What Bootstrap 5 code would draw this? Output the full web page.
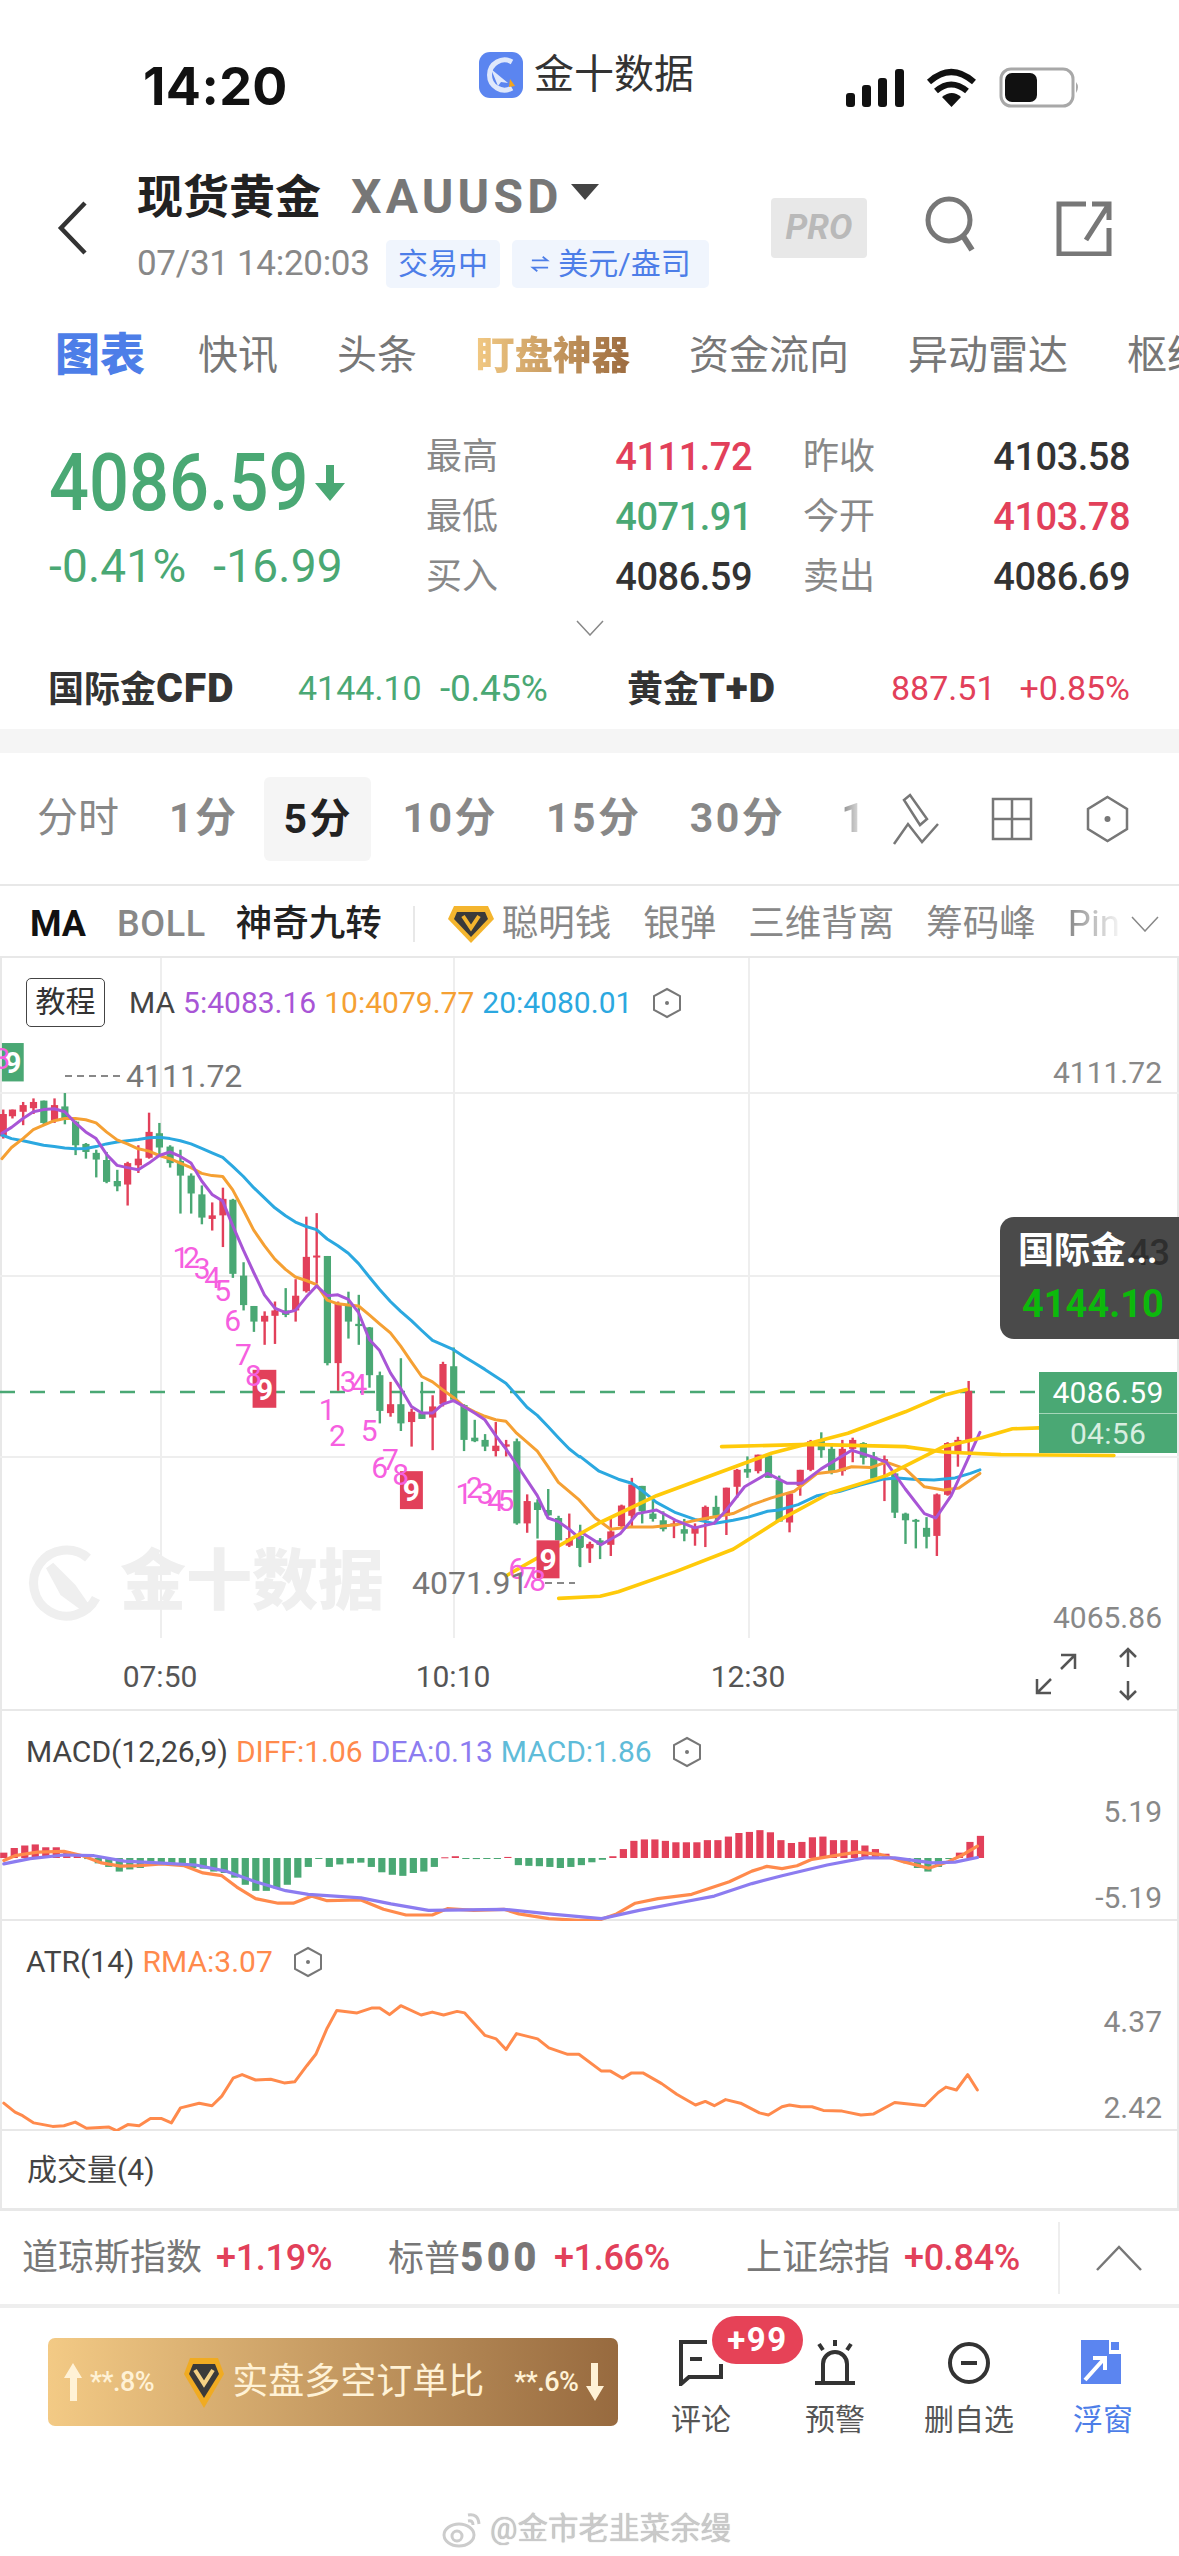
<!DOCTYPE html>
<html lang="zh-CN">
<head>
  <meta charset="UTF-8" />
  <title>现货黄金 XAUUSD</title>
  <link href="https://cdn.jsdelivr.net/npm/bootstrap@5.3.2/dist/css/bootstrap.min.css" rel="stylesheet">
  <style>
    body {
      width: 1179px;
      height: 2556px;
      overflow: hidden;
      background: #fff;
      font-family: Roboto, "Noto Sans CJK SC", sans-serif;
      color: #333;
    }
    svg { display: block; flex: none; }

    /* status bar */
    .status-row { height: 150px; }
    .clock { margin: 60px 0 0 143px; font: 700 52px/54px Inter, sans-serif; color: #111; width: 336px; letter-spacing: .4px; }
    .app-name { margin: 48px 0 0 0; width: 367px; gap: 11px; font-size: 40px; line-height: 54px; color: #333; }
    .status-icons { margin-top: 67px; }

    /* title header */
    .head-row { height: 170px; }
    .back-arrow { margin: 50px 0 0 56px; width: 81px; }
    .head-text { width: 634px; }
    .title-line { margin-top: 18px; height: 58px; font-size: 46px; line-height: 58px; font-weight: 700; color: #222; }
    .sym { margin-left: 30px; font-family: Roboto, sans-serif; font-size: 48px; letter-spacing: 4.2px; color: #777; }
    .sub-line { margin-top: 14px; gap: 12px; }
    .stamp { font-size: 35px; line-height: 48px; color: #888; width: 237px; letter-spacing: -.3px; white-space: nowrap; }
    .pill-soft { background: #f0f5fd; color: #4d7ee8; font-size: 30px; line-height: 48px; height: 48px; border-radius: 5px; padding: 0 12px; font-weight: 400; white-space: nowrap; }
    .pill-wide { width: 197px; padding: 0; }
    .pro-tag { margin: 48px 57px 0 0; width: 96px; height: 60px; background: #e8e8e8; border-radius: 4px; font: italic 700 35px/60px Roboto, sans-serif; color: #b9b9b9; text-align: center; }
    .search-btn { margin: 46px 78px 0 0; }
    .share-btn { margin-top: 50px; }

    /* tabs */
    .tab-row { height: 90px; padding: 10px 0 0 55px; gap: 59px; white-space: nowrap; overflow: hidden; }
    .tab-row .nav-link { padding: 0; color: #777; font-size: 40px; line-height: 52px; }
    .tab-row .nav-link.active { position: relative; margin-right: -6px; color: #4d7ee8; font-size: 45px; font-weight: 900; }
    .tab-row .nav-link.active::after { content: ""; position: absolute; left: 23px; bottom: -17px; width: 48px; height: 6px; background: #f5ab0a; }
    .tab-row .nav-link.gold-tab { font-size: 38.5px; font-weight: 900; background: linear-gradient(90deg, #f2c983, #9c6b3f); -webkit-background-clip: text; background-clip: text; color: transparent; }

    /* quote block */
    .quote-row { height: 205px; padding-top: 17px; }
    .price-col { width: 426px; padding: 14px 0 0 49px; color: #4aa874; }
    .big-price { line-height: 84px; gap: 4px; }
    .big-num { display: inline-block; width: 262px; font-size: 80px; font-weight: 500; transform: scaleX(.88); transform-origin: left; white-space: nowrap; }
    .price-diff { margin-top: 17px; font-size: 46px; line-height: 48px; gap: 27px; letter-spacing: .2px; }
    .stat-grid { display: grid; grid-template-columns: 326px 327px; column-gap: 51px; grid-auto-rows: 60px; }
    .stat-name { color: #888; font-size: 36px; }
    .stat-val { font-size: 38px; font-weight: 500; letter-spacing: -.5px; }
    .tone-up { color: #e2405a; }
    .tone-down { color: #4aa874; }
    .tone-flat { color: #333; }
    .more-mark { height: 37px; padding-top: 5px; }
    .cross-row { height: 77px; padding: 0 49px 4px 48px; font-size: 36px; }
    .cross-name { font-weight: 700; color: #333; }
    .cross-latin { font-size: 41px; font-weight: 900; letter-spacing: .8px; }
    .cross-a { width: 250px; }
    .cross-b { width: 142px; }
    .cross-num { font-size: 34px; }
    .cross-c { width: 187px; font-size: 37px; letter-spacing: -.3px; }
    .gap-band { height: 24px; background: #f5f5f5; }

    /* period strip */
    .period-row { height: 133px; border-bottom: 2px solid #e8e8e8; padding-left: 37px; color: #888; font-size: 41px; position: relative; }
    .period-item { font-weight: 700; white-space: nowrap; letter-spacing: 2.5px; margin-right: 48px; }
    .period-first { font-weight: 400; letter-spacing: 0; margin-right: 50px; }
    .period-item.now { margin: 0 32px 0 -23px; padding: 0 18px 0 20px; width: 107px; background: #f5f5f5; border-radius: 6px; line-height: 84px; color: #222; }
    .period-item.period-fade { background: linear-gradient(90deg, #888, #fff); -webkit-background-clip: text; background-clip: text; color: transparent; margin: 0 0 0 8px; }
    .tool-a, .tool-b, .tool-c { position: absolute; }
    .tool-a { left: 892px; top: 39px; }
    .tool-b { left: 991px; top: 44px; }
    .tool-c { left: 1086px; top: 42px; }

    /* indicator strip */
    .ind-row { height: 72px; border-bottom: 2px solid #e8e8e8; padding: 6px 0 0 30px; font-size: 36.5px; color: #888; white-space: nowrap; }
    .ind-on { color: #222; font-weight: 500; }
    .ind-ma { color: #111; font-weight: 700; margin-right: 31px; font-size: 36px; }
    .ind-boll { font-weight: 500; margin-right: 30px; letter-spacing: .6px; font-size: 36px; }
    .ind-item { margin-right: 32px; }
    .ind-bar { width: 2px; height: 36px; background: #e8e8e8; margin: 0 33px 0 31px; }
    .pin-fade { background: linear-gradient(90deg, #888, #fff); -webkit-background-clip: text; background-clip: text; color: transparent; width: 56px; margin-right: 7px; }

    /* chart panels */
    .panel-box { position: relative; border-left: 2px solid #e8e8e8; border-right: 2px solid #e8e8e8; }
    .chart-main { height: 680px; }
    .chart-main > svg, .chart-sub > svg { position: absolute; left: -2px; top: 0; }
    .legend-row { position: relative; font-size: 30px; line-height: 40px; gap: 8px; white-space: nowrap; }
    .legend-main { padding: 20px 0 0 24px; }
    .legend-sub { padding: 21px 0 0 24px; }
    .lesson-tag { border: 1.5px solid #444; border-radius: 5px; width: 79px; height: 49px; line-height: 46px; text-align: center; margin-right: 16px; color: #333; }
    .hex-ico { margin-left: 12px; }
    .c-ink { color: #444; }
    .c-ma5 { color: #a855d6; }
    .c-ma10 { color: #f5a033; }
    .c-ma20 { color: #2ba8e0; }
    .c-diff { color: #ff8a4c; }
    .c-dea { color: #8c7cf0; }
    .c-macd { color: #5fbcd9; }
    .time-row { height: 73px; border-bottom: 2px solid #e8e8e8; position: relative; font-size: 30px; color: #555; }
    .time-row span { position: absolute; top: 16px; transform: translateX(-50%); }
    .time-row svg { position: absolute; }
    .t-a { left: 158px; }
    .t-b { left: 451px; }
    .t-c { left: 746px; }
    .zoom-ico { left: 1033px; top: 15px; }
    .fit-ico { left: 1114px; top: 9px; }
    .chart-sub { height: 210px; border-bottom: 2px solid #e8e8e8; }
    .vol-box { height: 80px; border-bottom: 3px solid #e8e8e8; padding-left: 25px; font-size: 30px; color: #444; line-height: 77px; }
    .rate-tip { position: absolute; right: -2px; top: 259px; width: 179px; height: 122px; background: #4a4a4a; border-radius: 14px 0 0 14px; padding: 12px 0 0 18px; }
    .rate-tip em { position: absolute; left: 129px; top: 16px; font: 500 36px/40px Roboto, sans-serif; color: #2e2e2e; }
    .rate-tip b { position: relative; display: block; font-size: 36px; line-height: 44px; color: #fff; white-space: nowrap; }
    .rate-tip i { display: block; font: 700 38px/48px Roboto, sans-serif; color: #0cb90c; margin: 7px 0 0 4px; }
    .price-tag { position: absolute; right: 0; top: 414px; width: 138px; background: #4aa874; color: #fff; text-align: center; font-size: 30px; letter-spacing: .3px; }
    .price-tag div:first-child { line-height: 41px; border-bottom: 1px solid #a5d6b9; }
    .price-tag div:last-child { line-height: 39px; color: #d8eee0; }

    /* index strip */
    .index-row { height: 97px; border-bottom: 4px solid #eee; padding-left: 22px; font-size: 36px; color: #777; white-space: nowrap; }
    .index-pct { color: #e2405a; font-size: 36px; font-weight: 500; margin-left: 14px; letter-spacing: -.3px; }
    .index-mid { margin-left: 56px; }
    .index-mid b { font-size: 40px; font-weight: 900; letter-spacing: 3.4px; }
    .index-end { margin-left: 76px; }
    .index-split { width: 2px; height: 72px; background: #eee; margin-left: 38px; margin-right: 36px; }

    /* bottom bar */
    .foot-row { height: 130px; padding: 30px 0 0 48px; position: relative; }
    .ratio-btn { width: 570px; height: 88px; padding: 0 16px; border: 0; border-radius: 7px; background: linear-gradient(90deg, #f3ca85, #976a3f); color: #fff2d6; font-size: 36px; white-space: nowrap; }
    .ratio-num { font-size: 27px; letter-spacing: -.5px; font-weight: 500; }
    .ratio-ico { margin-left: 30px; }
    .ratio-low { margin-left: 30px; }
    .foot-items { margin-left: 16px; }
    .foot-item { position: relative; width: 134px; text-align: center; font-size: 30px; line-height: 36px; color: #555; padding-top: 2px; }
    .foot-item svg { margin: 0 auto 16px; }
    .foot-item.on { color: #4d7ee8; }
    .count-tag { position: absolute; left: 78px; top: -22px; width: 91px; height: 48px; line-height: 48px; padding: 0; border-radius: 24px; background: #e64257; font: 700 33px/48px Roboto, sans-serif; letter-spacing: 1.5px; }
    .mark-row { height: 110px; padding: 72px 0 0 442px; gap: 8px; }
    .mark-row span { color: #c9c9c9; font-size: 30.5px; line-height: 38px; text-shadow: 0 0 1px #aaa; white-space: nowrap; }

    text { font-family: Roboto, "Noto Sans CJK SC", sans-serif; }
  </style>
</head>
<body>

<!-- status bar -->
<div class="status-row d-flex">
  <div class="clock">14:20</div>
  <div class="app-name d-flex align-items-start">
    <svg width="44" height="46" viewBox="0 0 44 46" class="mt-1">
      <rect width="44" height="46" rx="11" fill="#5b85f0"/>
      <path d="M33 10a15 15 0 1 0 0 26" fill="none" stroke="#dfe8fb" stroke-width="5"/>
      <path d="M12 17l17 14-7-1-3 4z" fill="#dfe8fb"/>
      <path d="M31 27l5 7-6 1z" fill="#f3a51d"/>
    </svg>
    <span>金十数据</span>
  </div>
  <div class="status-icons d-flex">
    <svg width="240" height="42" viewBox="846 67 240 42">
      <rect x="846" y="93" width="9" height="14" rx="3" fill="#111"/>
      <rect x="862" y="85" width="9" height="22" rx="3" fill="#111"/>
      <rect x="878" y="78" width="9" height="29" rx="3" fill="#111"/>
      <rect x="895" y="69" width="9" height="38" rx="3" fill="#111"/>
      <path d="M929 82q22-20 45 0M936 91q15-13 31 0" fill="none" stroke="#111" stroke-width="6"/>
      <path d="M942 97q10-8 19 0l-9.500 10z" fill="#111"/>
      <rect x="1001" y="69" width="72" height="37" rx="10" fill="none" stroke="#a8a8a8" stroke-width="3"/>
      <rect x="1005" y="73" width="32" height="29" rx="7" fill="#111"/>
      <path d="M1076 82q4 5 0 11z" fill="#a8a8a8"/>
    </svg>
  </div>
</div>

<!-- title -->
<div class="head-row d-flex">
  <div class="back-arrow">
    <svg width="32" height="56" viewBox="0 0 32 56"><path d="M29 3L5 28l24 25" fill="none" stroke="#333" stroke-width="4.500"/></svg>
  </div>
  <div class="head-text">
    <div class="title-line d-flex">现货黄金<span class="sym">XAUUSD</span>
      <svg width="28" height="16" viewBox="0 0 28 16" class="ms-2 mt-3"><path d="M0 0h28L14 16z" fill="#444"/></svg>
    </div>
    <div class="sub-line d-flex align-items-center">
      <span class="stamp">07/31 14:20:03</span>
      <span class="pill-soft">交易中</span>
      <span class="pill-soft pill-wide d-flex align-items-center justify-content-center gap-2">
        <svg width="20" height="18" viewBox="0 0 22 20"><path d="M2 6h17l-5-4M20 14H3l5 4" fill="none" stroke="#4d7ee8" stroke-width="2"/></svg>美元/盎司
      </span>
    </div>
  </div>
  <div class="pro-tag">PRO</div>
  <div class="search-btn">
    <svg width="54" height="58" viewBox="0 0 54 58"><circle cx="25" cy="24" r="21" fill="none" stroke="#777" stroke-width="5"/><path d="M39 40l9 14" stroke="#777" stroke-width="6"/></svg>
  </div>
  <div class="share-btn">
    <svg width="56" height="56" viewBox="0 0 56 56"><path d="M30 4H3v50h50V28M53 4L30 40M36 4h17v16" fill="none" stroke="#777" stroke-width="5"/></svg>
  </div>
</div>

<!-- tabs -->
<nav class="nav flex-nowrap tab-row">
  <a class="nav-link active" href="#">图表</a>
  <a class="nav-link" href="#">快讯</a>
  <a class="nav-link" href="#">头条</a>
  <a class="nav-link gold-tab" href="#">盯盘神器</a>
  <a class="nav-link" href="#">资金流向</a>
  <a class="nav-link" href="#">异动雷达</a>
  <a class="nav-link" href="#">枢纽</a>
</nav>

<!-- quote -->
<div class="quote-row d-flex">
  <div class="price-col">
    <div class="big-price d-flex align-items-center"><span class="big-num">4086.59</span>
      <svg width="30" height="36" viewBox="0 0 30 36"><path d="M11 0h8v18h11L15 36 0 18h11z" fill="#4aa874"/></svg>
    </div>
    <div class="price-diff d-flex"><span>-0.41%</span><span>-16.99</span></div>
  </div>
  <div class="stat-grid">
    <div class="d-flex justify-content-between align-items-center"><span class="stat-name">最高</span><span class="stat-val tone-up">4111.72</span></div>
    <div class="d-flex justify-content-between align-items-center"><span class="stat-name">昨收</span><span class="stat-val tone-flat">4103.58</span></div>
    <div class="d-flex justify-content-between align-items-center"><span class="stat-name">最低</span><span class="stat-val tone-down">4071.91</span></div>
    <div class="d-flex justify-content-between align-items-center"><span class="stat-name">今开</span><span class="stat-val tone-up">4103.78</span></div>
    <div class="d-flex justify-content-between align-items-center"><span class="stat-name">买入</span><span class="stat-val tone-flat">4086.59</span></div>
    <div class="d-flex justify-content-between align-items-center"><span class="stat-name">卖出</span><span class="stat-val tone-flat">4086.69</span></div>
  </div>
</div>
<div class="more-mark d-flex justify-content-center align-items-start">
  <svg width="28" height="16" viewBox="0 0 28 16"><path d="M1 1l13 14L27 1" fill="none" stroke="#888" stroke-width="1.500"/></svg>
</div>
<div class="cross-row d-flex align-items-center">
  <span class="cross-name cross-a">国际金<span class="cross-latin">CFD</span></span>
  <span class="cross-num tone-down cross-b">4144.10</span>
  <span class="cross-num tone-down cross-c">-0.45%</span>
  <span class="cross-name flex-grow-1">黄金<span class="cross-latin">T+D</span></span>
  <span class="cross-num tone-up me-4">887.51</span>
  <span class="cross-num tone-up">+0.85%</span>
</div>
<div class="gap-band"></div>

<!-- period strip -->
<div class="period-row d-flex align-items-center">
  <span class="period-item period-first">分时</span>
  <span class="period-item">1分</span>
  <span class="period-item now">5分</span>
  <span class="period-item">10分</span>
  <span class="period-item">15分</span>
  <span class="period-item">30分</span>
  <span class="period-item period-fade">1</span>
  <svg class="tool-a" width="50" height="54" viewBox="0 0 50 54" fill="none" stroke="#777" stroke-width="2.500">
    <path d="M18 3l17 24-7 6-16-25zM2 52l14-20 14 18 16-18"/>
  </svg>
  <svg class="tool-b" width="42" height="44" viewBox="0 0 42 44" fill="none" stroke="#777" stroke-width="2.500">
    <path d="M2 2h38v40H2zM21 2v40M2 22h38"/>
  </svg>
  <svg class="tool-c" width="43" height="48" viewBox="0 0 43 48" fill="none" stroke="#777" stroke-width="2.500">
    <path d="M21.500 2L41 14v20L21.500 46 2 34V14z"/><circle cx="21.500" cy="24" r="3" fill="#777" stroke="none"/>
  </svg>
</div>

<!-- indicator strip -->
<div class="ind-row d-flex align-items-center">
  <span class="ind-ma">MA</span>
  <span class="ind-boll">BOLL</span>
  <span class="ind-on">神奇九转</span>
  <span class="ind-bar"></span>
  <svg width="46" height="38" viewBox="0 0 46 38" class="me-2"><path d="M6 1h34l6 13-23 24L0 14z" fill="#f4b52e"/><path d="M9 7h28l3 7-17 18L6 14z" fill="#3a3a3a"/><path d="M15 11l8 12 8-12" fill="none" stroke="#f4b52e" stroke-width="4"/></svg>
  <span class="ind-item">聪明钱</span>
  <span class="ind-item">银弹</span>
  <span class="ind-item">三维背离</span>
  <span class="ind-item">筹码峰</span>
  <span class="pin-fade">Pin</span>
  <svg width="28" height="16" viewBox="0 0 28 16"><path d="M1 1l13 14L27 1" fill="none" stroke="#888" stroke-width="1.500"/></svg>
</div>

<!-- main chart -->
<div class="panel-box chart-main">
  <svg id="mainChart" width="1179" height="680" viewBox="0 958 1179 680"></svg>
  <div class="legend-row legend-main d-flex align-items-center">
    <span class="lesson-tag">教程</span>
    <span class="c-ink">MA</span>
    <span class="c-ma5">5:4083.16</span>
    <span class="c-ma10">10:4079.77</span>
    <span class="c-ma20">20:4080.01</span>
    <svg width="30" height="32" viewBox="0 0 30 32" class="hex-ico" fill="none" stroke="#777" stroke-width="2"><path d="M15 2l13 7v14l-13 7-13-7V9z"/><circle cx="15" cy="16" r="2" fill="#777" stroke="none"/></svg>
  </div>
  <div class="rate-tip"><em>43</em><b>国际金...</b><i>4144.10</i></div>
  <div class="price-tag"><div>4086.59</div><div>04:56</div></div>
</div>
<div class="panel-box time-row">
  <span class="t-a">07:50</span>
  <span class="t-b">10:10</span>
  <span class="t-c">12:30</span>
  <svg class="zoom-ico" width="42" height="42" viewBox="0 0 42 42" fill="none" stroke="#555" stroke-width="2.500"><path d="M26 2h14v14M40 2L26 16M2 26v14h14M2 40l14-14"/></svg>
  <svg class="fit-ico" width="24" height="54" viewBox="0 0 24 54" fill="none" stroke="#555" stroke-width="2.500"><path d="M12 20V2M4 10l8-8 8 8M12 34v18M4 44l8 8 8-8"/></svg>
</div>

<!-- MACD -->
<div class="panel-box chart-sub">
  <svg id="macdChart" width="1179" height="210" viewBox="0 1711 1179 210"></svg>
  <div class="legend-row legend-sub d-flex align-items-center">
    <span class="c-ink">MACD(12,26,9)</span>
    <span class="c-diff">DIFF:1.06</span>
    <span class="c-dea">DEA:0.13</span>
    <span class="c-macd">MACD:1.86</span>
    <svg width="30" height="32" viewBox="0 0 30 32" class="hex-ico" fill="none" stroke="#777" stroke-width="2"><path d="M15 2l13 7v14l-13 7-13-7V9z"/><circle cx="15" cy="16" r="2" fill="#777" stroke="none"/></svg>
  </div>
</div>

<!-- ATR -->
<div class="panel-box chart-sub">
  <svg id="atrChart" width="1179" height="210" viewBox="0 1921 1179 210"></svg>
  <div class="legend-row legend-sub d-flex align-items-center">
    <span class="c-ink">ATR(14)</span>
    <span class="c-diff">RMA:3.07</span>
    <svg width="30" height="32" viewBox="0 0 30 32" class="hex-ico" fill="none" stroke="#777" stroke-width="2"><path d="M15 2l13 7v14l-13 7-13-7V9z"/><circle cx="15" cy="16" r="2" fill="#777" stroke="none"/></svg>
  </div>
</div>

<div class="panel-box vol-box">成交量(4)</div>

<!-- index strip -->
<div class="index-row d-flex align-items-center">
  <span>道琼斯指数</span><span class="index-pct">+1.19%</span>
  <span class="index-mid">标普<b>500</b></span><span class="index-pct">+1.66%</span>
  <span class="index-end">上证综指</span><span class="index-pct">+0.84%</span>
  <span class="index-split"></span>
  <svg width="46" height="26" viewBox="0 0 46 26"><path d="M1 25L23 2l22 23" fill="none" stroke="#777" stroke-width="2.500"/></svg>
</div>

<!-- bottom bar -->
<div class="foot-row d-flex">
  <button class="btn ratio-btn d-flex align-items-center" type="button">
    <svg width="18" height="38" viewBox="0 0 18 38"><path d="M9 0l9 15h-5v23H6V15H0z" fill="#fff2d6"/></svg>
    <span class="ratio-num ms-2">**.8%</span>
    <svg class="ratio-ico" width="40" height="52" viewBox="0 0 40 52"><path d="M6 2h28l6 16-20 34L0 18z" fill="#f0ab22"/><path d="M9 8h22l4 10-15 24L5 18z" fill="#3a3a3a"/><path d="M11 14l9 14 9-14" fill="none" stroke="#f4d184" stroke-width="4"/></svg>
    <span class="ms-2">实盘多空订单比</span>
    <span class="ratio-num ratio-low">**.6%</span>
    <svg width="18" height="38" viewBox="0 0 18 38" class="ms-2"><path d="M9 38L0 23h5V0h7v23h6z" fill="#fff2d6"/></svg>
  </button>
  <div class="foot-items d-flex">
    <div class="foot-item">
      <svg width="44" height="46" viewBox="0 0 44 46" fill="none" stroke="#333" stroke-width="4"><path d="M28 2H2v42l8-7h32V24M11 19h12"/></svg>
      评论
      <span class="badge count-tag">+99</span>
    </div>
    <div class="foot-item">
      <svg width="44" height="46" viewBox="0 0 44 46" fill="none" stroke="#333" stroke-width="4"><path d="M10 42V24a12 12 0 0 1 24 0v18M2 43h40M22 0v6M6 4l4 6M38 4l-4 6"/></svg>
      预警
    </div>
    <div class="foot-item">
      <svg width="44" height="46" viewBox="0 0 44 46" fill="none" stroke="#333"><circle cx="22" cy="23" r="19" stroke-width="4"/><path d="M14 23h16" stroke-width="4"/></svg>
      删自选
    </div>
    <div class="foot-item on">
      <svg width="44" height="46" viewBox="0 0 44 46"><path d="M0 0h28v14h12v30H0z" fill="#5b85f0"/><path d="M30 2h8v8h-8z" fill="#5b85f0"/><path d="M4 40l18-20M12 18h12v12" fill="none" stroke="#fff" stroke-width="4"/></svg>
      浮窗
    </div>
  </div>
</div>
<div class="mark-row d-flex">
  <svg width="40" height="38" viewBox="0 0 40 38" fill="none" stroke="#ccc" stroke-width="3"><ellipse cx="17" cy="25" rx="15" ry="11"/><circle cx="15" cy="26" r="5"/><path d="M26 5q10-2 11 9M26 11q5-1 5 4"/></svg>
  <span>@金市老韭菜余缦</span>
</div>

<script>
  const RED = "#e2405a", GREEN = "#4aa874";
  const NS = "http://www.w3.org/2000/svg";

  function add(svg, tag, attrs, txt) {
    const el = document.createElementNS(NS, tag);
    for (const k in attrs) el.setAttribute(k, attrs[k]);
    if (txt !== undefined) el.textContent = txt;
    svg.appendChild(el);
    return el;
  }

  // crop coordinates measured on the reference -> page coordinates
  const z3 = p => [p[0] / 2.613, 960 + p[1] / 2.24];
  const z4 = p => [580 + p[0] / 2.613, 960 + p[1] / 2.24];
  const z5 = p => [p[0] / 1.33, 1680 + p[1] / 2.8];

  function line(svg, pts, color, width) {
    add(svg, "polyline", {
      points: pts.map(p => p[0].toFixed(1) + "," + p[1].toFixed(1)).join(" "),
      fill: "none", stroke: color, "stroke-width": width,
      "stroke-linejoin": "round", "stroke-linecap": "round"
    });
  }

  function axisText(svg, y, txt) {
    add(svg, "text", { x: 1162, y: y, "text-anchor": "end", "font-size": 30, fill: "#888" }, txt);
  }

  // ---- main chart
  const main = document.getElementById("mainChart");
  [1092, 1275, 1456, 1638].forEach(y => add(main, "rect", { x: 0, y: y, width: 1179, height: 2, fill: "#eee" }));
  [160, 453, 748].forEach(x => add(main, "rect", { x: x, y: 958, width: 2, height: 680, fill: "#eee" }));
  add(main, "line", { x1: 0, x2: 1040, y1: 1392, y2: 1392, stroke: GREEN, "stroke-width": 2.5, "stroke-dasharray": "15 15" });

  // x, wick top, body top, body bottom, wick bottom, colour
  const leftCandles = [
    [8,335,345,395,400,"r"],[32,335,335,350,355,"r"],[60,318,325,340,370,"r"],[87,310,318,332,345,"r"],
    [114,315,315,365,368,"g"],[142,310,325,360,365,"r"],[169,298,328,355,368,"g"],[197,360,362,415,437,"g"],
    [224,410,412,430,445,"g"],[251,425,432,447,487,"g"],[278,430,448,497,500,"g"],[306,470,495,507,518,"g"],
    [333,452,455,503,550,"r"],[361,415,445,460,477,"r"],[389,342,385,443,445,"r"],[416,365,388,420,435,"g"],
    [444,415,418,455,465,"g"],[471,425,450,483,568,"g"],[499,478,483,523,568,"g"],[527,505,525,577,592,"g"],
    [554,543,572,580,606,"r"],[582,510,535,572,643,"r"],[608,535,537,703,712,"g"],[636,677,707,773,785,"g"],
    [663,775,775,810,833,"g"],[691,787,797,810,862,"r"],[718,765,785,797,860,"r"],[746,735,785,795,800,"g"],
    [772,715,752,785,810,"r"],[800,575,665,742,745,"r"],[827,567,662,665,725,"r"],[855,663,663,903,908,"g"],
    [883,765,770,903,965,"r"],[910,743,775,810,848,"g"],[937,750,815,820,862,"g"],[965,822,823,930,958,"g"],
    [992,922,930,1010,1038,"g"],[1020,945,995,1015,1023,"r"],[1047,892,995,1038,1055,"g"],[1075,1005,1012,1035,1090,"r"],
    [1102,945,1015,1028,1028,"g"],[1130,975,1000,1025,1098,"r"],[1157,900,905,995,1000,"r"],[1185,868,910,985,990,"g"],
    [1212,995,997,1075,1100,"g"],[1240,1030,1070,1078,1080,"g"],[1267,1062,1075,1090,1100,"g"],[1295,1035,1088,1100,1112,"r"],
    [1322,1075,1085,1090,1112,"r"],[1350,1072,1078,1262,1265,"g"],[1377,1197,1212,1262,1283,"r"],[1404,1208,1215,1232,1296,"g"],
    [1432,1185,1232,1244,1245,"g"],[1459,1245,1250,1300,1300,"g"],[1487,1240,1295,1312,1315,"r"],[1514,1285,1292,1317,1358,"g"],
    [1541,1303,1308,1315,1350,"r"]
  ];
  const rightCandles = [
    [0,1265,1290,1315,1360,"g"],[25,1305,1310,1318,1350,"r"],[52,1295,1300,1310,1342,"g"],[80,1250,1280,1310,1335,"r"],
    [108,1220,1222,1268,1270,"r"],[135,1160,1175,1245,1272,"r"],[162,1178,1178,1235,1262,"g"],[190,1205,1240,1252,1258,"g"],
    [217,1235,1255,1275,1280,"g"],[245,1255,1262,1268,1295,"r"],[272,1252,1275,1285,1302,"g"],[300,1262,1270,1285,1312,"r"],
    [327,1222,1225,1255,1315,"r"],[355,1200,1225,1245,1262,"g"],[382,1182,1182,1245,1288,"r"],[410,1140,1142,1180,1205,"r"],
    [437,1112,1140,1148,1160,"g"],[465,1108,1108,1145,1150,"r"],[492,1108,1110,1160,1160,"g"],[520,1155,1165,1258,1258,"g"],
    [547,1195,1195,1260,1282,"r"],[575,1142,1142,1178,1200,"r"],[602,1075,1078,1142,1145,"r"],[630,1058,1075,1098,1115,"g"],
    [657,1082,1095,1145,1152,"g"],[685,1075,1095,1145,1155,"r"],[712,1070,1075,1095,1125,"r"],[740,1080,1082,1115,1130,"g"],
    [767,1102,1112,1162,1165,"g"],[795,1110,1118,1125,1212,"r"],[822,1145,1150,1238,1250,"g"],[850,1238,1240,1255,1308,"g"],
    [877,1252,1254,1258,1318,"g"],[905,1248,1272,1292,1318,"g"],[932,1195,1197,1290,1335,"r"],[960,1080,1082,1198,1200,"r"],
    [987,1068,1075,1105,1135,"r"],[1015,943,965,1075,1105,"r"]
  ];
  function drawCandles(list, map) {
    list.forEach(c => {
      const color = c[5] === "r" ? RED : GREEN;
      const top = map([c[0], c[1]]), bTop = map([c[0], c[2]]), bBot = map([c[0], c[3]]), low = map([c[0], c[4]]);
      add(main, "rect", { x: top[0] - 1, y: top[1], width: 2.4, height: low[1] - top[1], fill: color });
      add(main, "rect", { x: top[0] - 3.4, y: bTop[1], width: 7.2, height: Math.max(bBot[1] - bTop[1], 2), fill: color });
    });
  }
  drawCandles(leftCandles, z3);
  drawCandles(rightCandles, z4);

  const ma20 = [[5,392],[30,400],[60,405],[87,410],[114,415],[142,418],[169,421],[197,423],[224,422],[251,418],[278,412],[306,408],[333,405],[361,402],[389,398],[416,397],[444,400],[471,405],[499,412],[527,422],[554,432],[582,442],[608,462],[636,485],[663,510],[691,533],[718,555],[746,573],[772,587],[800,597],[827,604],[855,625],[883,640],[910,657],[937,680],[965,710],[992,738],[1020,765],[1047,787],[1075,808],[1102,830],[1130,852],[1157,862],[1185,873],[1212,888],[1240,903],[1267,917],[1295,933],[1322,948],[1350,975],[1377,1002],[1404,1020],[1432,1045],[1459,1070],[1487,1095],[1514,1113]].map(z3)
    .concat([[0,1112],[50,1145],[100,1163],[135,1172],[165,1190],[200,1215],[250,1238],[300,1253],[350,1262],[400,1255],[440,1248],[490,1235],[520,1232],[570,1220],[620,1200],[680,1190],[730,1177],[790,1163],[830,1160],[870,1163],[925,1165],[980,1160],[1020,1150],[1045,1142]].map(z4));
  const ma10 = [[5,445],[30,420],[60,400],[87,380],[114,370],[142,360],[169,355],[197,355],[224,358],[251,365],[278,385],[306,403],[333,412],[361,423],[389,428],[416,438],[444,445],[471,455],[499,465],[527,478],[554,483],[582,485],[608,515],[636,560],[663,605],[691,640],[718,670],[746,693],[772,710],[800,718],[827,727],[855,762],[883,770],[910,773],[937,775],[965,795],[992,815],[1020,835],[1047,865],[1075,900],[1102,933],[1130,945],[1157,963],[1185,980],[1212,1000],[1240,1012],[1267,1022],[1295,1030],[1322,1033],[1350,1060],[1377,1080],[1404,1100],[1432,1135],[1459,1170],[1487,1190],[1514,1210]].map(z3)
    .concat([[0,1212],[40,1250],[80,1275],[130,1270],[190,1270],[250,1265],[320,1252],[400,1240],[450,1220],[500,1205],[560,1190],[620,1150],[670,1145],[710,1135],[760,1137],[800,1125],[850,1140],[900,1180],[950,1187],[990,1183],[1020,1165],[1045,1150]].map(z4));
  const ma5 = [[5,388],[30,375],[60,355],[87,340],[114,335],[142,333],[169,340],[197,365],[224,385],[251,400],[278,435],[306,460],[333,465],[361,470],[389,455],[416,438],[444,430],[471,440],[499,455],[527,495],[554,525],[582,540],[608,595],[636,650],[663,700],[691,750],[718,780],[746,790],[772,785],[800,755],[827,730],[855,752],[883,750],[910,760],[937,790],[965,850],[992,875],[1020,925],[1047,960],[1075,1000],[1102,1015],[1130,1015],[1157,995],[1185,987],[1212,1000],[1240,1015],[1267,1030],[1295,1065],[1322,1095],[1350,1130],[1377,1165],[1404,1200],[1432,1250],[1459,1258],[1487,1275],[1514,1295]].map(z3)
    .concat([[0,1280],[55,1310],[105,1285],[150,1240],[200,1232],[250,1255],[300,1272],[350,1262],[380,1235],[430,1180],[490,1150],[540,1172],[580,1172],[630,1140],[710,1098],[760,1112],[800,1125],[850,1185],[900,1240],[930,1250],[970,1200],[1010,1125],[1045,1058]].map(z4));
  line(main, ma20, "#2ba8e0", 3);
  line(main, ma10, "#f5a033", 3);
  line(main, ma5, "#a855d6", 3);

  // hand drawn channel
  const yellow = "#ffca0a";
  line(main, [z3([1325,1378]), z3([1568,1260])].concat([[200,1200],[500,1105],[700,1060],[850,1012],[950,975],[1010,962]].map(z4)), yellow, 3.6);
  line(main, [[370,1090],[600,1085],[850,1090],[950,1102],[1100,1108],[1395,1110]].map(z4), yellow, 3.6);
  line(main, [z3([1460,1430]), z3([1568,1425])].concat([[100,1415],[250,1370],[400,1320],[520,1255],[650,1195],[800,1155],[950,1090],[1050,1070],[1130,1050],[1200,1048]].map(z4)), yellow, 3.6);

  // nine-turn marks
  [[5,186,57,86,GREEN],[660,918,62,85,RED],[1045,1145,60,85,RED],[1402,1300,60,85,RED]].forEach(b => {
    const p = z3([b[0], b[1]]);
    add(main, "rect", { x: p[0], y: p[1], width: b[2] / 2.613, height: b[3] / 2.24, fill: b[4] });
    add(main, "text", { x: p[0] + b[2] / 5.2, y: p[1] + 30, "text-anchor": "middle", "font-size": 30, "font-weight": 700, fill: "#fff" }, "9");
  });
  const pink = [["1",473,690],["2",500,690],["3",528,714],["4",556,734],["5",582,764],["6",608,832],["7",636,907],["8",662,954],["3",5,244],
    ["1",855,1030],["2",882,1089],["3",910,967],["4",938,975],["5",965,1077],["6",992,1160],["7",1020,1142],["8",1047,1175],
    ["1",1212,1219],["2",1240,1204],["3",1268,1219],["4",1295,1234],["5",1322,1234],["6",1350,1387],["7",1380,1407],["8",1405,1414]];
  pink.forEach(n => {
    const p = z3([n[1], n[2]]);
    add(main, "text", { x: p[0], y: p[1], "text-anchor": "middle", "font-size": 30, fill: "#f65fe0" }, n[0]);
  });

  // watermark
  add(main, "text", { x: 120, y: 1604, "font-size": 66, "font-weight": 900, fill: "#efefef" }, "金十数据");
  add(main, "path", { d: "M88 1558a33 33 0 1 0 8 40M50 1566l22 22 14 20-22-16z", fill: "none", stroke: "#efefef", "stroke-width": 9 });

  // high and low marks
  add(main, "line", { x1: 65, x2: 120, y1: 1076, y2: 1076, stroke: "#888", "stroke-width": 2, "stroke-dasharray": "7 5" });
  add(main, "text", { x: 126, y: 1087, "font-size": 32, fill: "#777" }, "4111.72");
  add(main, "text", { x: 412, y: 1594, "font-size": 32, fill: "#777" }, "4071.91");
  add(main, "line", { x1: 545, x2: 575, y1: 1583, y2: 1583, stroke: "#888", "stroke-width": 2, "stroke-dasharray": "7 5" });
  axisText(main, 1083, "4111.72");
  axisText(main, 1628, "4065.86");

  // ---- MACD
  const macd = document.getElementById("macdChart");
  const bars = [15,28,35,38,30,30,18,8,-3,-15,-25,-38,-32,-28,-20,-12,-18,-20,-28,-30,-38,-42,-55,-75,-92,-92,-85,-75,-55,-25,-2,-25,-18,-15,-13,-25,-40,-47,-50,-42,-38,-25,2,5,-2,-3,-2,-1,3,-20,-22,-23,-25,-28,-25,-20,-12,-5,5,25,48,52,52,48,44,44,44,50,50,60,70,73,78,72,50,42,45,58,60,50,50,50,35,25,12,-3,-15,-28,-38,-25,-3,15,45,62];
  const barStep = (1304 - 5) / (bars.length - 1);
  bars.forEach((v, i) => {
    const x = (5 + barStep * i) / 1.33;
    const h = Math.abs(v) / 2.8;
    add(macd, "rect", { x: x - 3.6, y: v > 0 ? 1858 - h : 1858, width: 7.2, height: Math.max(h, 1), fill: v > 0 ? RED : GREEN });
  });
  line(macd, [[5,505],[20,492],[50,482],[85,480],[110,492],[135,512],[160,521],[185,520],[215,515],[245,520],[270,540],[295,548],[315,580],[340,612],[370,625],[390,625],[415,605],[435,618],[480,616],[510,642],[540,658],[575,658],[595,640],[630,645],[670,642],[690,655],[730,668],[770,673],[800,670],[820,655],[845,625],[875,612],[920,600],[945,582],[970,565],[1000,535],[1020,522],[1040,528],[1060,520],[1080,502],[1110,492],[1140,482],[1170,488],[1200,508],[1235,527],[1260,510],[1280,490],[1300,465]].map(z5), "#ff8a4c", 3.2);
  line(macd, [[5,515],[40,500],[85,490],[125,492],[165,507],[210,512],[260,518],[300,535],[340,565],[380,590],[410,600],[480,610],[520,627],[570,645],[670,642],[730,655],[800,668],[850,645],[900,625],[950,605],[1000,570],[1040,548],[1100,518],[1150,498],[1190,498],[1240,512],[1270,510],[1300,497]].map(z5), "#8c7cf0", 3.2);
  axisText(macd, 1822, "5.19");
  axisText(macd, 1908, "-5.19");

  // ---- ATR
  const atr = document.getElementById("atrChart");
  line(atr, [[5,1185],[20,1210],[30,1220],[45,1240],[70,1250],[85,1248],[100,1238],[115,1255],[145,1252],[155,1262],[170,1245],[185,1248],[200,1228],[215,1228],[228,1240],[240,1198],[265,1185],[282,1192],[295,1165],[310,1115],[322,1105],[340,1120],[360,1118],[378,1128],[392,1125],[408,1080],[420,1048],[435,975],[448,925],[475,932],[495,918],[505,918],[518,937],[533,912],[560,938],[575,930],[590,938],[608,928],[618,932],[645,995],[660,1005],[673,1035],[687,990],[715,1005],[730,1030],[755,1048],[770,1048],[800,1095],[812,1095],[828,1115],[840,1100],[855,1100],[880,1130],[900,1160],[925,1190],[938,1180],[950,1192],[965,1175],[985,1185],[1010,1212],[1022,1218],[1040,1195],[1050,1190],[1065,1195],[1080,1195],[1095,1205],[1120,1207],[1145,1218],[1162,1215],[1190,1183],[1230,1192],[1248,1155],[1258,1140],[1272,1148],[1287,1105],[1300,1148]].map(z5), "#ff8a4c", 3);
  axisText(atr, 2032, "4.37");
  axisText(atr, 2118, "2.42");
</script>
<script src="https://cdn.jsdelivr.net/npm/bootstrap@5.3.2/dist/js/bootstrap.bundle.min.js"></script>
</body>
</html>
